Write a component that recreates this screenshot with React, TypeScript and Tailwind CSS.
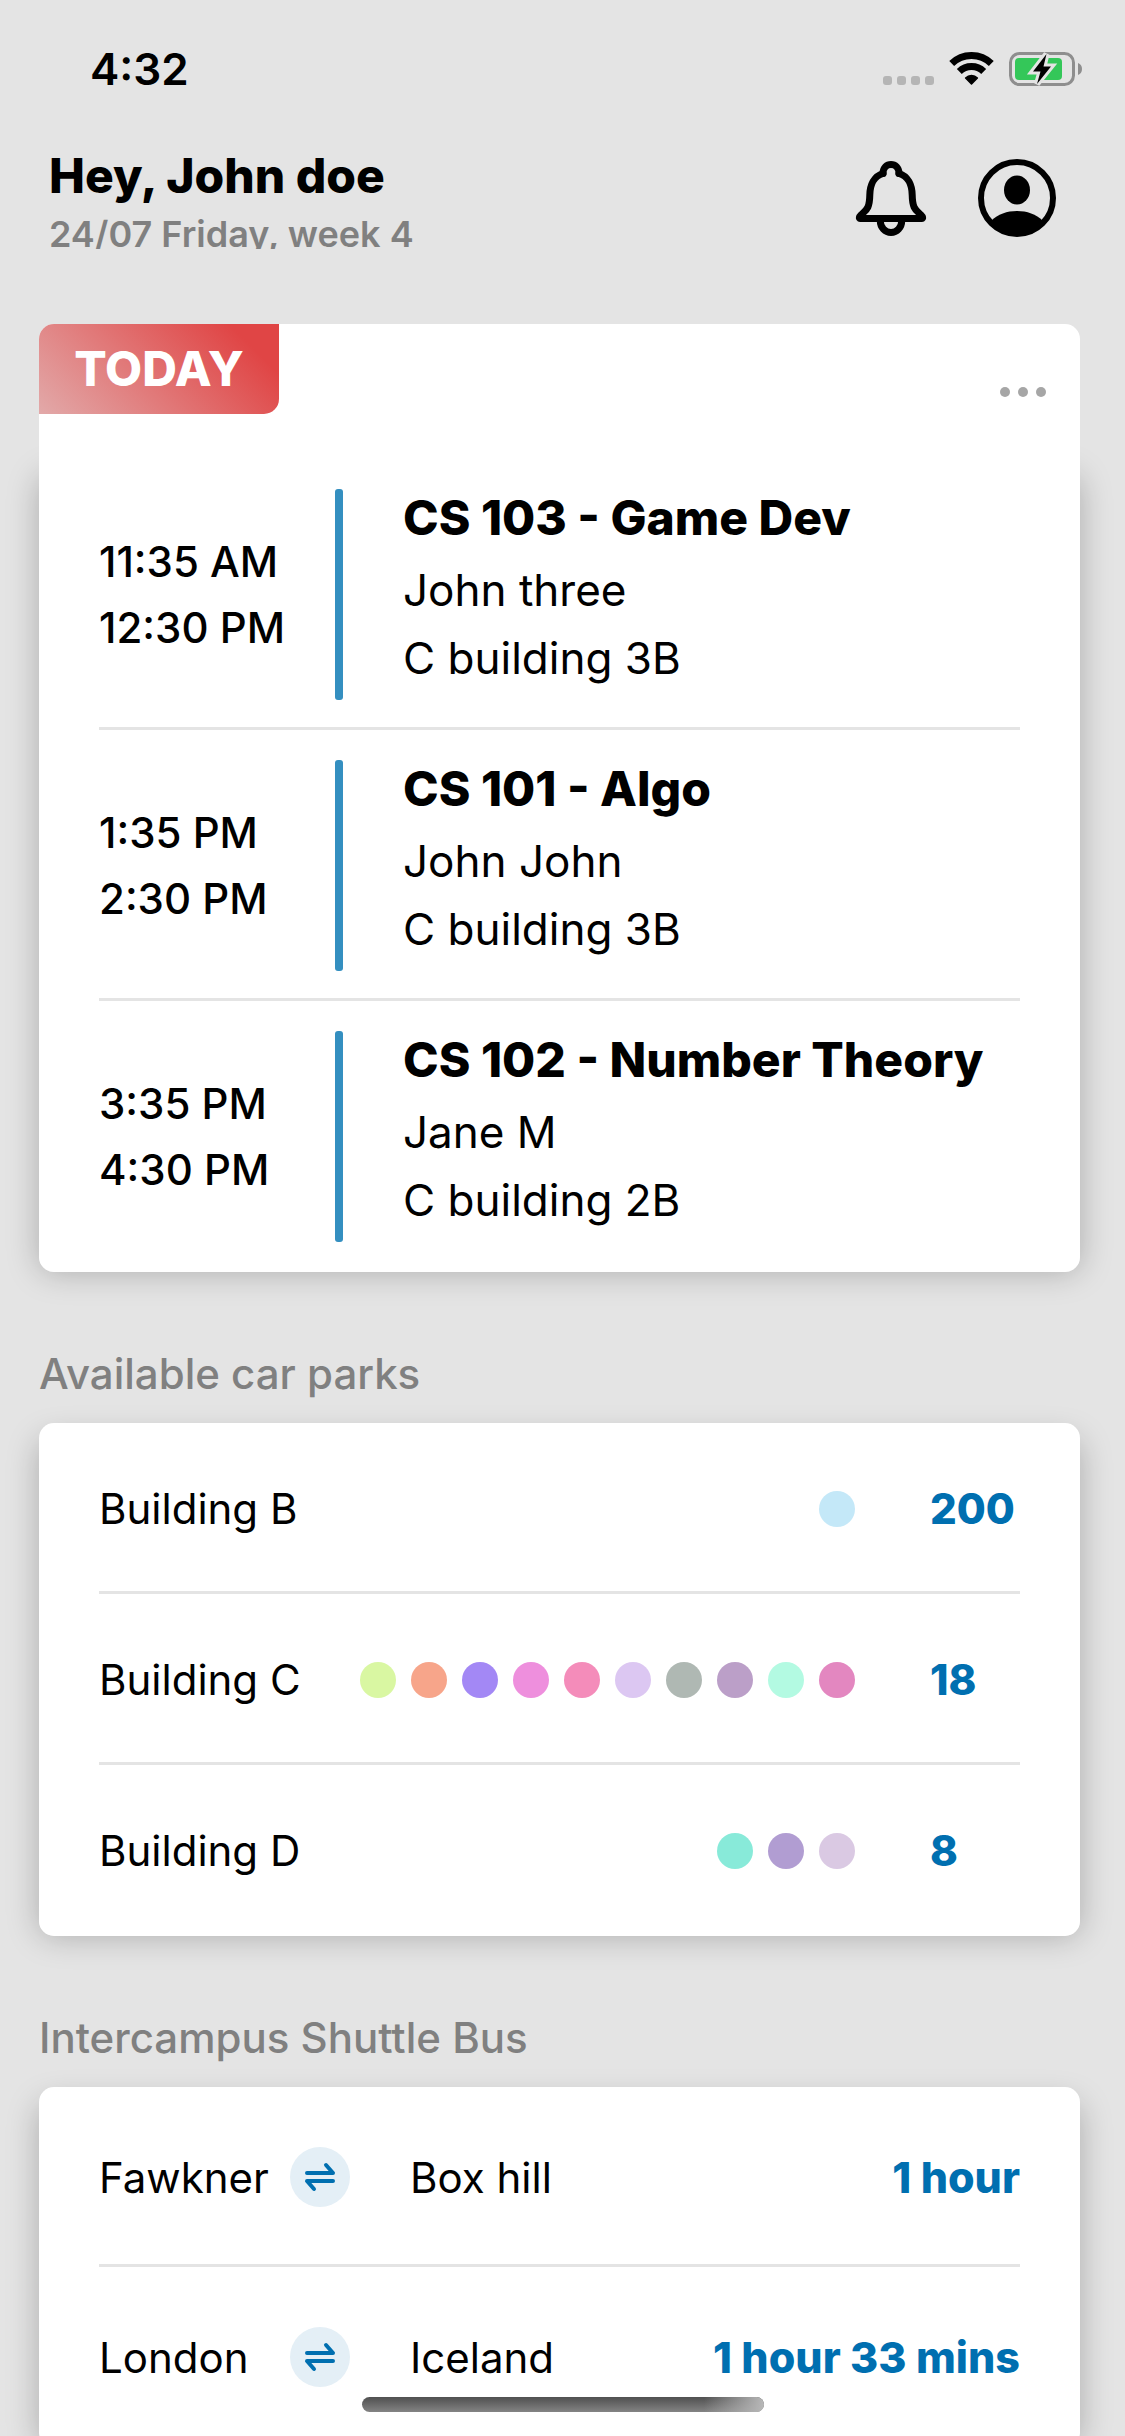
import React from "react";

type Lesson = {
  start: string;
  end: string;
  title: string;
  teacher: string;
  room: string;
};

const lessons: Lesson[] = [
  { start: "11:35 AM", end: "12:30 PM", title: "CS 103 - Game Dev", teacher: "John three", room: "C building 3B" },
  { start: "1:35 PM", end: "2:30 PM", title: "CS 101 - Algo", teacher: "John John", room: "C building 3B" },
  { start: "3:35 PM", end: "4:30 PM", title: "CS 102 - Number Theory", teacher: "Jane M", room: "C building 2B" },
];

const carParks = [
  { name: "Building B", spaces: 200, dots: ["bg-[#c4e8f8]"] },
  {
    name: "Building C",
    spaces: 18,
    dots: [
      "bg-[#d9f7a2]",
      "bg-[#f7a58a]",
      "bg-[#a388f5]",
      "bg-[#ee8fdd]",
      "bg-[#f48cba]",
      "bg-[#dcc7f2]",
      "bg-[#afb8b3]",
      "bg-[#bb9fc8]",
      "bg-[#b3fae2]",
      "bg-[#e387c0]",
    ],
  },
  { name: "Building D", spaces: 8, dots: ["bg-[#88ead9]", "bg-[#b19dd2]", "bg-[#dac9e3]"] },
];

const routes = [
  { from: "Fawkner", to: "Box hill", time: "1 hour" },
  { from: "London", to: "Iceland", time: "1 hour 33 mins" },
];

function WifiIcon() {
  return (
    <svg width="45" height="34" viewBox="0 0 45 34" fill="none" aria-hidden="true">
      <path d="M2.7 11.5A28.5 28.5 0 0 1 42.3 11.5" stroke="black" strokeWidth="7" />
      <path d="M10.3 19.4A17.5 17.5 0 0 1 34.7 19.4" stroke="black" strokeWidth="7" />
      <path d="M22.5 32L16.6 26A8.5 8.5 0 0 1 28.4 26Z" fill="black" stroke="black" strokeWidth="1.5" strokeLinejoin="round" />
    </svg>
  );
}

function BatteryIcon() {
  return (
    <svg width="74" height="36" viewBox="0 0 74 36" fill="none" aria-hidden="true">
      <rect x="1.5" y="2.5" width="63" height="31" rx="9" stroke="#8e8e8e" strokeWidth="3" />
      <rect x="6" y="7" width="47" height="22" rx="4" fill="#34c759" />
      <path d="M69 12a6.5 6.5 0 0 1 0 12Z" fill="#8e8e8e" />
      <path d="M37.5 3L24 20.5h7.5L28 33L42 15.5H34.5Z" fill="black" stroke="#e4e4e4" strokeWidth="6" paintOrder="stroke" />
    </svg>
  );
}

function BellIcon() {
  return (
    <svg width="76" height="78" viewBox="0 0 76 78" fill="none" stroke="black" strokeWidth="7" strokeLinejoin="round" aria-hidden="true">
      <path d="M30 14.5C30 2.5 46 2.5 46 14.5" strokeLinecap="round" />
      <path d="M30 14.5C21 17 17 26 16.8 36C16.6 50 13 51 8 56C6 58 6 59.5 7 59.5H69C70 59.5 70 58 68 56C63 51 59.4 50 59.2 36C59 26 55 17 46 14.5" strokeLinecap="round" />
      <path d="M27.3 62a10.7 11.5 0 0 0 21.4 0" />
    </svg>
  );
}

function ProfileIcon() {
  return (
    <svg width="78" height="78" viewBox="0 0 78 78" aria-hidden="true">
      <circle cx="39" cy="39" r="36" fill="none" stroke="black" strokeWidth="6" />
      <ellipse cx="39" cy="31" rx="13" ry="14.5" />
      <path d="M13 62C20 55 29 52 39 52S58 55 65 62C58 73 48 77 39 77S20 73 13 62Z" />
    </svg>
  );
}

function SwapIcon() {
  return (
    <svg width="32" height="30" viewBox="0 0 32 30" fill="none" stroke="#006fb0" strokeWidth="4" strokeLinecap="round" strokeLinejoin="round" aria-hidden="true">
      <path d="M3 11H29L22 3" />
      <path d="M29 19H3L10 27" />
    </svg>
  );
}

/* The shadow sits on a layer behind the card that starts a little below its top edge. */
const cardShadow =
  "relative before:absolute before:inset-x-0 before:top-[16px] before:bottom-0 before:-z-10 before:rounded-[15px] before:shadow-[0_0_32px_rgba(0,0,0,0.25)]";

export default function App() {
  return (
    <div className="relative h-screen overflow-hidden bg-[#e4e4e4] font-['Inter',sans-serif] text-black">
      <div className="h-full overflow-y-auto [scrollbar-width:none]">
        <div className="flex h-[138px] items-center justify-between pl-[90px] pr-[42px]">
          <span className="text-[44px] leading-none font-semibold">4:32</span>
          <div className="flex items-center">
            <div className="mt-[22px] flex gap-[5px]">
              <span className="size-[9px] rounded-[3px] bg-[#b5b5b5]" />
              <span className="size-[9px] rounded-[3px] bg-[#b5b5b5]" />
              <span className="size-[9px] rounded-[3px] bg-[#b5b5b5]" />
              <span className="size-[9px] rounded-[3px] bg-[#b5b5b5]" />
            </div>
            <div className="ml-[15px] mr-[15px]">
              <WifiIcon />
            </div>
            <BatteryIcon />
          </div>
        </div>

        <header className="flex h-[186px] items-start justify-between pl-[49px] pr-[69px]">
          <div className="pt-[10px]">
            <h1 className="text-[48px] leading-[56px] font-extrabold">Hey, John doe</h1>
            <p className="mt-[8px] h-[37px] overflow-hidden text-[36px] leading-[44px] font-semibold text-[#808080]">
              24/07 Friday, week 4
            </p>
          </div>
          <div className="flex items-center gap-[49px] pt-[21px]">
            <button type="button" aria-label="Notifications">
              <BellIcon />
            </button>
            <button type="button" aria-label="Profile">
              <ProfileIcon />
            </button>
          </div>
        </header>

        <main className="pl-[39px] pr-[45px]">
          <section className="isolate">
            <div className="flex h-[135px] items-start justify-between rounded-t-[15px] bg-white">
              <h2 className="flex h-[90px] w-[240px] items-center justify-center rounded-tl-[15px] rounded-br-[15px] bg-[linear-gradient(45deg,#e2a9a9,#e04545_85%)] text-[48px] font-extrabold text-white">
                TODAY
              </h2>
              <button type="button" aria-label="More options" className="mt-[51px] mr-[22px] flex gap-[8px] p-[12px]">
                <span className="size-[10px] rounded-full bg-[#a6a6a6]" />
                <span className="size-[10px] rounded-full bg-[#a6a6a6]" />
                <span className="size-[10px] rounded-full bg-[#a6a6a6]" />
              </button>
            </div>
            <ul className={`rounded-b-[15px] bg-white px-[60px] ${cardShadow}`}>
              {lessons.map((lesson) => (
                <li key={lesson.title} className="flex h-[271px] border-b-3 border-[#e4e4e4] pt-[30px] last:border-b-0">
                  <div className="flex h-[211px] w-[236px] shrink-0 flex-col justify-center text-[42px] leading-[66px] font-medium">
                    <time>{lesson.start}</time>
                    <time>{lesson.end}</time>
                  </div>
                  <span className="h-[211px] w-[8px] shrink-0 rounded-[3px] bg-[#348fc0]" />
                  <div className="ml-[60px] min-w-0 whitespace-nowrap">
                    <h3 className="text-[48px] leading-[58px] font-extrabold">{lesson.title}</h3>
                    <p className="mt-[9px] text-[44px] leading-[68px]">{lesson.teacher}</p>
                    <p className="text-[44px] leading-[68px]">{lesson.room}</p>
                  </div>
                </li>
              ))}
            </ul>
          </section>

          <section className="isolate">
            <h2 className="pt-[76px] pb-[24px] text-[42px] leading-[51px] font-medium text-[#808080]">Available car parks</h2>
            <ul className={`rounded-[15px] bg-white px-[60px] ${cardShadow}`}>
              {carParks.map((park) => (
                <li key={park.name} className="flex h-[171px] items-center border-b-3 border-[#e4e4e4] pt-[3px] last:border-b-0 last:pt-0">
                  <span className="text-[42px]">{park.name}</span>
                  <div className="ml-auto flex gap-[15px]">
                    {park.dots.map((dot) => (
                      <span key={dot} className={`size-[36px] rounded-full ${dot}`} />
                    ))}
                  </div>
                  <span className="ml-[75px] w-[90px] text-[42px] font-extrabold text-[#006fb0]">{park.spaces}</span>
                </li>
              ))}
            </ul>
          </section>

          <section className="isolate">
            <h2 className="pt-[76px] pb-[24px] text-[42px] leading-[51px] font-medium text-[#808080]">Intercampus Shuttle Bus</h2>
            <ul className={`rounded-[15px] bg-white px-[60px] ${cardShadow}`}>
              {routes.map((route) => (
                <li key={route.from} className="flex h-[180px] items-center border-b-3 border-[#e4e4e4] pt-[3px] text-[42px] last:border-b-0 last:pt-0">
                  <span className="w-[191px]">{route.from}</span>
                  <span className="flex size-[60px] items-center justify-center rounded-full bg-[#e4eff6]">
                    <SwapIcon />
                  </span>
                  <span className="ml-[60px]">{route.to}</span>
                  <span className="ml-auto text-[43px] font-extrabold text-[#006fb0]">{route.time}</span>
                </li>
              ))}
            </ul>
          </section>
        </main>
      </div>

      <div className="absolute bottom-[24px] left-1/2 h-[15px] w-[402px] -translate-x-1/2 overflow-hidden rounded-full bg-linear-to-b from-[#505050] to-[#848484]">
        <div className="ml-auto h-full w-[60px] bg-linear-to-r from-transparent to-[#b8b8b8]" />
      </div>
    </div>
  );
}
